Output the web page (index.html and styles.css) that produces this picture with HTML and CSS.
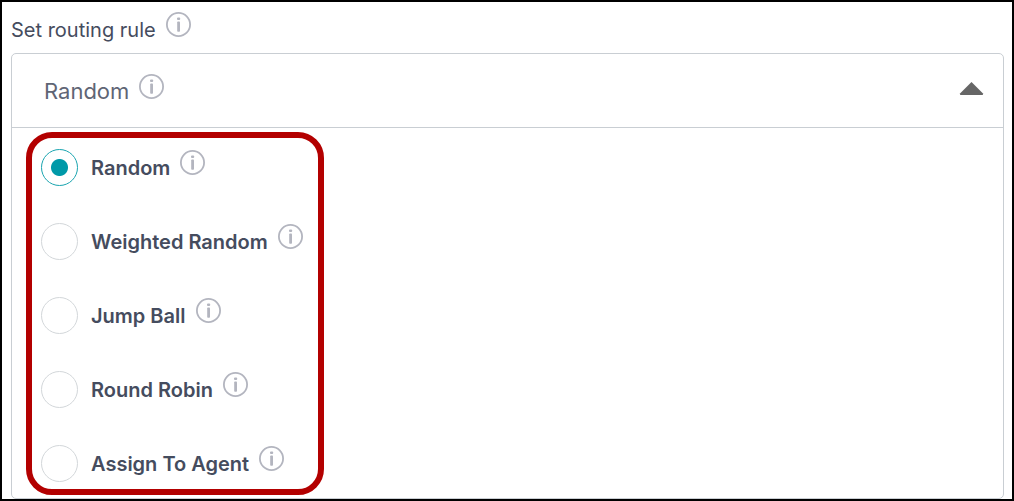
FILE: index.html
```
<!DOCTYPE html>
<html lang="en">
<head>
    <meta charset="utf-8">
    <title>Set routing rule</title>
    <link rel="stylesheet" href="styles.css">
</head>
<body>
    <svg class="sprite" aria-hidden="true">
        <symbol id="info" viewBox="0 0 25 25">
            <circle cx="12.5" cy="12.5" r="11.6" fill="none" stroke="currentColor" stroke-width="1.8"/>
            <rect x="11" y="5.4" width="3.2" height="2.6" rx="1"/>
            <rect x="11.2" y="9.4" width="2.8" height="10.4" rx="0.8"/>
        </symbol>
    </svg>
    <main class="frame">
        <h1 class="title">Set routing rule <svg class="info"><use href="#info"/></svg></h1>
        <section class="panel">
            <button type="button" class="selected" aria-expanded="true">
                <span class="selected-text">Random <svg class="info"><use href="#info"/></svg></span>
                <svg class="arrow" viewBox="0 0 24 13"><path d="M12 0 L23.5 11.5 Q24 13 22.5 13 H1.5 Q0 13 0.5 11.5 Z"/></svg>
            </button>
            <fieldset class="options" aria-label="Routing rule">
                <div class="option">
                    <input type="radio" name="rule" id="random" checked>
                    <label for="random">Random <svg class="info"><use href="#info"/></svg></label>
                </div>
                <div class="option">
                    <input type="radio" name="rule" id="weighted">
                    <label for="weighted">Weighted Random <svg class="info"><use href="#info"/></svg></label>
                </div>
                <div class="option">
                    <input type="radio" name="rule" id="jump">
                    <label for="jump">Jump Ball <svg class="info"><use href="#info"/></svg></label>
                </div>
                <div class="option">
                    <input type="radio" name="rule" id="robin">
                    <label for="robin">Round Robin <svg class="info"><use href="#info"/></svg></label>
                </div>
                <div class="option">
                    <input type="radio" name="rule" id="agent">
                    <label for="agent">Assign To Agent <svg class="info"><use href="#info"/></svg></label>
                </div>
            </fieldset>
        </section>
    </main>
</body>
</html>
```
FILE: styles.css
```
* {
    box-sizing: border-box;
}
body {
    margin: 0;
    font-family: Inter, sans-serif;
    color: #454c5e;
    background-color: #fff;
}
.sprite {
    display: none;
}
.frame {
    border: 2px solid #000;
    padding: 10px 8px 0 9px;
}
.title,
.selected-text,
.option label {
    display: flex;
    align-items: baseline;
    gap: 10px;
    line-height: 24px;
}
.title {
    margin: 0 0 11px;
    font-size: 20px;
    font-weight: 400;
}
.info {
    width: 25px;
    height: 25px;
    flex: none;
    color: #b3b5bf;
    fill: currentColor;
}
.panel {
    border: 1px solid #c9ced3;
    border-radius: 5px;
}
.selected {
    display: flex;
    justify-content: space-between;
    align-items: center;
    width: 100%;
    height: 74px;
    padding: 0 19px 0 32px;
    border: none;
    border-bottom: 1px solid #c9ced3;
    background: none;
    font: inherit;
    color: #5f6575;
    cursor: pointer;
}
.selected-text {
    padding-bottom: 4px;
    font-size: 22px;
}
.arrow {
    width: 25px;
    height: 13px;
    margin-bottom: 4px;
    fill: #666;
}
/* red highlight around the choices */
.options {
    display: flex;
    flex-direction: column;
    gap: 37px;
    width: 298px;
    margin: 4px 14px 3px;
    padding: 11px 9px 7px;
    border: 6px solid #b30000;
    border-radius: 26px;
}
.option {
    display: flex;
    align-items: center;
    gap: 13px;
    height: 37px;
}
.option input {
    appearance: none;
    flex: none;
    width: 37px;
    height: 37px;
    margin: 0;
    border: 1px solid #d3d7da;
    border-radius: 50%;
}
.option input:checked {
    border-color: #1aa5b0;
    background: radial-gradient(circle, #0099a8 8px, transparent 9px);
}
.option label {
    padding-bottom: 6px;
    font-size: 20px;
    font-weight: 600;
    white-space: nowrap;
}
```
